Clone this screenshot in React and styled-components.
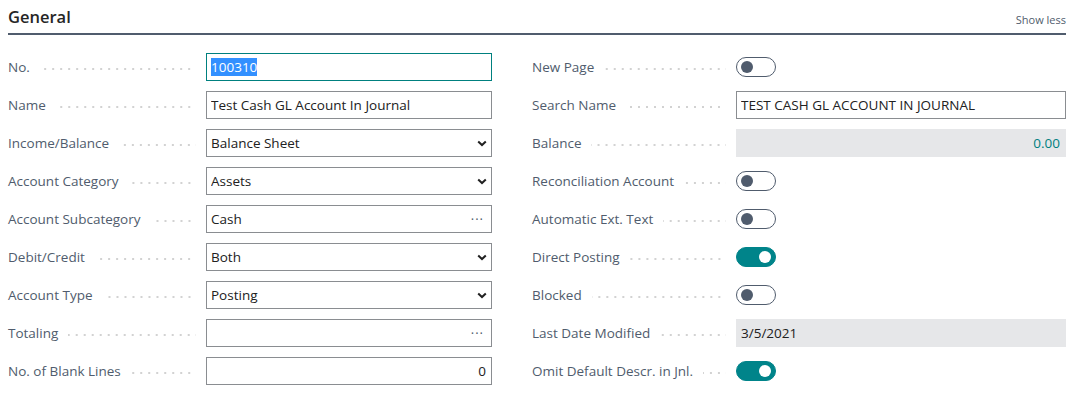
import styled, { createGlobalStyle } from 'styled-components'

const GlobalStyle = createGlobalStyle`
   body {
      margin: 0;
      background: #ffffff;
      font-family: "Open Sans", "Noto Sans", sans-serif;
   }
`

const left = [
   { label: 'No.', kind: 'text', value: '100310', focused: true },
   { label: 'Name', kind: 'text', value: 'Test Cash GL Account In Journal' },
   { label: 'Income/Balance', kind: 'select', value: 'Balance Sheet' },
   { label: 'Account Category', kind: 'select', value: 'Assets' },
   { label: 'Account Subcategory', kind: 'lookup', value: 'Cash' },
   { label: 'Debit/Credit', kind: 'select', value: 'Both' },
   { label: 'Account Type', kind: 'select', value: 'Posting' },
   { label: 'Totaling', kind: 'lookup', value: '' },
   { label: 'No. of Blank Lines', kind: 'number', value: '0' },
]

const right = [
   { label: 'New Page', kind: 'toggle', on: false },
   { label: 'Search Name', kind: 'text', value: 'TEST CASH GL ACCOUNT IN JOURNAL' },
   { label: 'Balance', kind: 'readonly', value: '0.00', align: 'right', teal: true },
   { label: 'Reconciliation Account', kind: 'toggle', on: false },
   { label: 'Automatic Ext. Text', kind: 'toggle', on: false },
   { label: 'Direct Posting', kind: 'toggle', on: true },
   { label: 'Blocked', kind: 'toggle', on: false },
   { label: 'Last Date Modified', kind: 'readonly', value: '3/5/2021' },
   { label: 'Omit Default Descr. in Jnl.', kind: 'toggle', on: true },
]

const Chevron = () => (
   <svg width="10" height="7" viewBox="0 0 10 7">
      <path d="M1.2 1.4 L5 5 L8.8 1.4" fill="none" stroke="#212121" strokeWidth="2" />
   </svg>
)

const Control = ({ field }) => {
   switch (field.kind) {
      case 'toggle':
         return (
            <Toggle $on={field.on}>
               <Knob $on={field.on} />
            </Toggle>
         )
      case 'readonly':
         return (
            <ReadOnly $align={field.align} $teal={field.teal}>
               {field.value}
            </ReadOnly>
         )
      case 'select':
         return (
            <Box>
               <Value>{field.value}</Value>
               <Chevron />
            </Box>
         )
      case 'lookup':
         return (
            <Box>
               <Value>{field.value}</Value>
               <Ellipsis>···</Ellipsis>
            </Box>
         )
      case 'number':
         return (
            <Box>
               <Value $align="right">{field.value}</Value>
            </Box>
         )
      default:
         return (
            <Box $focused={field.focused}>
               <Value>{field.focused ? <Selected>{field.value}</Selected> : field.value}</Value>
            </Box>
         )
   }
}

const FieldColumn = ({ fields, labelWidth }) => (
   <Column>
      {fields.map((f) => (
         <Row key={f.label} $labelWidth={labelWidth}>
            <Label>
               <span>{f.label}</span>
               <Leader />
            </Label>
            <Control field={f} />
         </Row>
      ))}
   </Column>
)

const App = () => {
   return (
      <>
         <GlobalStyle />
         <Page>
            <Header>
               <Title>General</Title>
               <ShowLess>Show less</ShowLess>
            </Header>
            <Grid>
               <FieldColumn fields={left} labelWidth={198} />
               <FieldColumn fields={right} labelWidth={204} />
            </Grid>
         </Page>
      </>
   )
}

const Page = styled.div`
   width: 1058px;
   padding: 0 6px 0 8px;
   color: #212121;
`

const Header = styled.div`
   display: flex;
   justify-content: space-between;
   align-items: flex-end;
   height: 35px;
   border-bottom: 2px solid #505c6d;
   padding-bottom: 5px;
   box-sizing: border-box;
`

const Title = styled.h2`
   margin: 0;
   font-size: 16.5px;
   font-weight: 600;
   color: #262626;
   line-height: 22px;
`

const ShowLess = styled.span`
   font-size: 11px;
   color: #505c6d;
   line-height: 16px;
`

const Grid = styled.div`
   display: grid;
   grid-template-columns: 484px 534px;
   column-gap: 40px;
   padding-top: 18px;
`

const Column = styled.div`
   display: flex;
   flex-direction: column;
   gap: 10px;
`

const Row = styled.div`
   display: grid;
   grid-template-columns: ${(p) => p.$labelWidth}px 1fr;
   align-items: center;
   height: 28px;
`

const Label = styled.div`
   display: flex;
   align-items: center;
   font-size: 13.5px;
   color: #505c6d;
   white-space: nowrap;
   padding-right: 10px;
`

const Leader = styled.span`
   flex: 1;
   height: 2px;
   margin: 3px 0 0 10px;
   background-image: linear-gradient(to right, #d2d2d2 2px, transparent 2px);
   background-size: 8px 2px;
   background-repeat: repeat-x;
   background-position: right center;
`

const Box = styled.div`
   display: flex;
   align-items: center;
   height: 28px;
   box-sizing: border-box;
   border: 1px solid ${(p) => (p.$focused ? '#00807f' : '#8a8d91')};
   padding: 0 4px 0 4px;
   gap: 6px;
   background: #fff;
`

const Value = styled.span`
   flex: 1;
   font-size: 13.5px;
   color: #212121;
   text-align: ${(p) => p.$align || 'left'};
   white-space: nowrap;
   overflow: hidden;
   padding-right: ${(p) => (p.$align === 'right' ? '1px' : '0')};
`

const Selected = styled.span`
   background: #3390ff;
   color: #fff;
   padding: 2px 0;
`

const Ellipsis = styled.span`
   font-size: 13px;
   color: #505c6d;
   letter-spacing: 1px;
   padding-right: 3px;
`

const ReadOnly = styled.div`
   height: 28px;
   line-height: 28px;
   box-sizing: border-box;
   background: #e6e7e9;
   padding: 0 6px 0 5px;
   font-size: 13.5px;
   text-align: ${(p) => p.$align || 'left'};
   color: ${(p) => (p.$teal ? '#00807f' : '#212121')};
`

const Toggle = styled.div`
   width: 40px;
   height: 20px;
   box-sizing: border-box;
   border-radius: 10px;
   border: 1px solid ${(p) => (p.$on ? '#00848a' : '#505c6d')};
   background: ${(p) => (p.$on ? '#00848a' : '#fff')};
   display: flex;
   align-items: center;
   justify-content: ${(p) => (p.$on ? 'flex-end' : 'flex-start')};
   padding: 0 4px;
`

const Knob = styled.span`
   width: 12px;
   height: 12px;
   border-radius: 50%;
   background: ${(p) => (p.$on ? '#fff' : '#505c6d')};
`

export default App
